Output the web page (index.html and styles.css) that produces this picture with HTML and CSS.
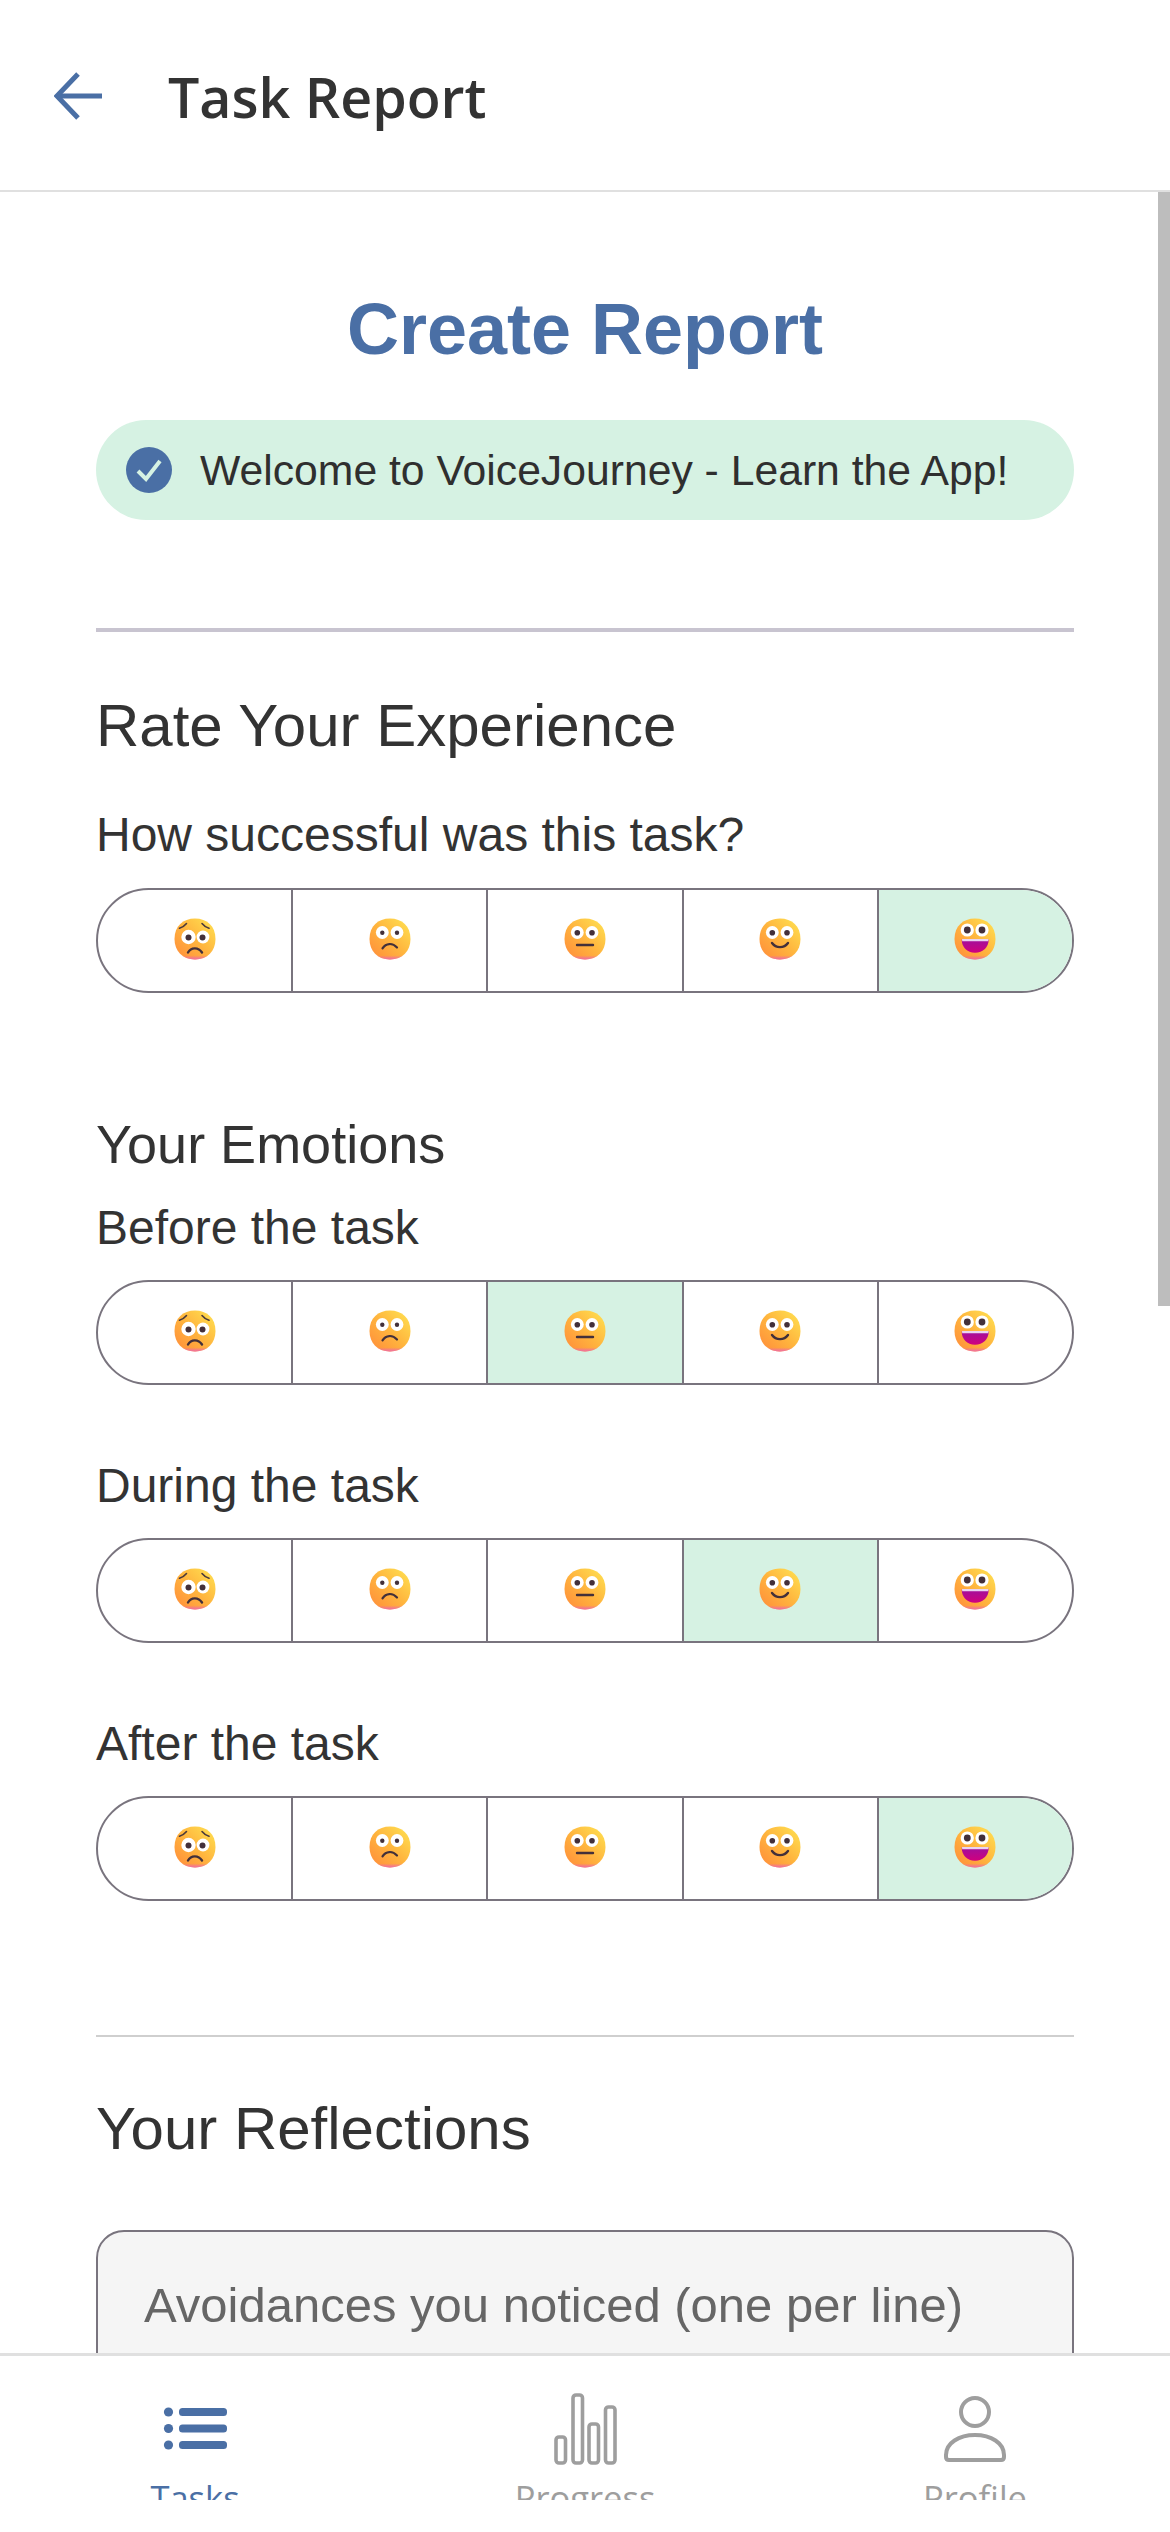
FILE: index.html
```html
<!DOCTYPE html>
<html lang="en">
<head>
<meta charset="UTF-8">
<meta name="viewport" content="width=device-width, initial-scale=1.0">
<title>Task Report</title>
<link rel="stylesheet" href="styles.css">
</head>
<body>
<svg class="svg-defs" aria-hidden="true">
    <defs>
        <linearGradient id="face-fill" x1="0" y1="1" x2="1" y2="0">
            <stop offset="0" stop-color="#ff8a3a"/>
            <stop offset="0.5" stop-color="#ffb53e"/>
            <stop offset="1" stop-color="#ffe452"/>
        </linearGradient>
        <linearGradient id="face-chin" x1="0" y1="0" x2="0" y2="1">
            <stop offset="0.9" stop-color="#f06aa8" stop-opacity="0"/>
            <stop offset="1" stop-color="#ee6ab0"/>
        </linearGradient>
        <linearGradient id="mouth-fill" x1="0" y1="0" x2="0" y2="1">
            <stop offset="0" stop-color="#a0109c"/>
            <stop offset="1" stop-color="#d0007e"/>
        </linearGradient>
        <symbol id="face" viewBox="0 0 42 42">
            <path d="M21 0.5C33 0.5 41.5 8 41.5 21C41.5 33 33.5 41.5 21 41.5C8.5 41.5 0.5 33 0.5 21C0.5 8 9 0.5 21 0.5Z" fill="url(#face-fill)"/>
            <path d="M21 0.5C33 0.5 41.5 8 41.5 21C41.5 33 33.5 41.5 21 41.5C8.5 41.5 0.5 33 0.5 21C0.5 8 9 0.5 21 0.5Z" fill="url(#face-chin)"/>
        </symbol>
        <symbol id="emoji-1" viewBox="0 0 42 42">
            <use href="#face" width="42" height="42"/>
            <circle cx="14.5" cy="19" r="7.2" fill="#fff"/>
            <circle cx="29" cy="19" r="6.4" fill="#fff"/>
            <circle cx="14.5" cy="19.5" r="3" fill="#43303a"/>
            <circle cx="28.5" cy="19.5" r="3" fill="#43303a"/>
            <path d="M5.5 10.2C7.5 9.6 10.5 8 12.5 5.5M28 5.5C30 8 32.5 9.6 35 10.2" fill="none" stroke="#4a3a3c" stroke-width="1.6" stroke-linecap="round"/>
            <path d="M14 34.5C17 29 24.5 29 28 34.5" fill="none" stroke="#43303a" stroke-width="2.4" stroke-linecap="round"/>
        </symbol>
        <symbol id="emoji-2" viewBox="0 0 42 42">
            <use href="#face" width="42" height="42"/>
            <circle cx="13.3" cy="14.5" r="6.4" fill="#fff"/>
            <circle cx="28" cy="14.5" r="6.4" fill="#fff"/>
            <circle cx="13.3" cy="14.7" r="2.2" fill="#43303a"/>
            <circle cx="28" cy="14.7" r="2.2" fill="#43303a"/>
            <path d="M13.5 30.3C17 25 23.5 24.5 28 29.5" fill="none" stroke="#43303a" stroke-width="2.2" stroke-linecap="round"/>
        </symbol>
        <symbol id="emoji-3" viewBox="0 0 42 42">
            <use href="#face" width="42" height="42"/>
            <circle cx="13.3" cy="14.5" r="6.4" fill="#fff"/>
            <circle cx="28" cy="14.5" r="6.4" fill="#fff"/>
            <circle cx="13.3" cy="14.7" r="2.8" fill="#43303a"/>
            <circle cx="28" cy="14.7" r="2.8" fill="#43303a"/>
            <path d="M13 27H29" fill="none" stroke="#43303a" stroke-width="2.4" stroke-linecap="round"/>
        </symbol>
        <symbol id="emoji-4" viewBox="0 0 42 42">
            <use href="#face" width="42" height="42"/>
            <circle cx="13.3" cy="14.5" r="6.4" fill="#fff"/>
            <circle cx="28" cy="14.5" r="6.4" fill="#fff"/>
            <circle cx="13.3" cy="14.7" r="2.8" fill="#43303a"/>
            <circle cx="28" cy="14.7" r="2.8" fill="#43303a"/>
            <path d="M13 25C17 30.5 25 30.5 29 25" fill="none" stroke="#43303a" stroke-width="2.4" stroke-linecap="round"/>
        </symbol>
        <symbol id="emoji-5" viewBox="0 0 42 42">
            <use href="#face" width="42" height="42"/>
            <circle cx="13.3" cy="12" r="6.6" fill="#fff"/>
            <circle cx="28" cy="12" r="6.6" fill="#fff"/>
            <circle cx="13.3" cy="12" r="3.4" fill="#43303a"/>
            <circle cx="28" cy="12" r="3.4" fill="#43303a"/>
            <path d="M7.7 21.5H34.7C34.7 29 29 34.7 21 34.7C13 34.7 7.7 29 7.7 21.5Z" fill="url(#mouth-fill)"/>
            <path d="M8 21H34.5L34.2 23.3H8.2Z" fill="#e9d4f2"/>
        </symbol>
    </defs>
</svg>

<div class="app">
    <header class="top-bar">
        <svg class="back-icon" viewBox="0 0 48 48" fill="none" stroke="#4a6fa5" stroke-width="5">
            <path d="M48 24H4"/>
            <path d="M24 2L3 24L24 46"/>
        </svg>
        <h1 class="top-title">Task Report</h1>
    </header>

    <main class="content">
        <div class="scroll-thumb"></div>
        <h2 class="page-title">Create Report</h2>
        <div class="banner">
            <svg class="banner-check" viewBox="0 0 46 46">
                <circle cx="23" cy="23" r="23" fill="#4a6fa5"/>
                <path d="M12 24L20 32L34 14" fill="none" stroke="#d6f2e3" stroke-width="4"/>
            </svg>
            <span>Welcome to VoiceJourney - Learn the App!</span>
        </div>
        <hr class="rule rule-thick">

        <h3 class="section-title">Rate Your Experience</h3>
        <div class="field-label first">How successful was this task?</div>
        <div class="rating">
            <div class="rating-cell"><svg class="emoji"><use href="#emoji-1"/></svg></div>
            <div class="rating-cell"><svg class="emoji"><use href="#emoji-2"/></svg></div>
            <div class="rating-cell"><svg class="emoji"><use href="#emoji-3"/></svg></div>
            <div class="rating-cell"><svg class="emoji"><use href="#emoji-4"/></svg></div>
            <div class="rating-cell selected"><svg class="emoji"><use href="#emoji-5"/></svg></div>
        </div>

        <h3 class="sub-title">Your Emotions</h3>
        <div class="field-label tight">Before the task</div>
        <div class="rating">
            <div class="rating-cell"><svg class="emoji"><use href="#emoji-1"/></svg></div>
            <div class="rating-cell"><svg class="emoji"><use href="#emoji-2"/></svg></div>
            <div class="rating-cell selected"><svg class="emoji"><use href="#emoji-3"/></svg></div>
            <div class="rating-cell"><svg class="emoji"><use href="#emoji-4"/></svg></div>
            <div class="rating-cell"><svg class="emoji"><use href="#emoji-5"/></svg></div>
        </div>
        <div class="field-label spaced">During the task</div>
        <div class="rating">
            <div class="rating-cell"><svg class="emoji"><use href="#emoji-1"/></svg></div>
            <div class="rating-cell"><svg class="emoji"><use href="#emoji-2"/></svg></div>
            <div class="rating-cell"><svg class="emoji"><use href="#emoji-3"/></svg></div>
            <div class="rating-cell selected"><svg class="emoji"><use href="#emoji-4"/></svg></div>
            <div class="rating-cell"><svg class="emoji"><use href="#emoji-5"/></svg></div>
        </div>
        <div class="field-label spaced">After the task</div>
        <div class="rating">
            <div class="rating-cell"><svg class="emoji"><use href="#emoji-1"/></svg></div>
            <div class="rating-cell"><svg class="emoji"><use href="#emoji-2"/></svg></div>
            <div class="rating-cell"><svg class="emoji"><use href="#emoji-3"/></svg></div>
            <div class="rating-cell"><svg class="emoji"><use href="#emoji-4"/></svg></div>
            <div class="rating-cell selected"><svg class="emoji"><use href="#emoji-5"/></svg></div>
        </div>

        <hr class="rule rule-thin">
        <h3 class="section-title reflections">Your Reflections</h3>
        <div class="note-box">Avoidances you noticed (one per line)</div>
    </main>

    <nav class="bottom-nav">
        <div class="nav-item active">
            <svg class="nav-icon" viewBox="0 0 64 72" fill="#4a6fa5">
                <circle cx="5.5" cy="19" r="4.6"/>
                <rect x="16" y="15" width="48" height="8" rx="3.5"/>
                <circle cx="5.5" cy="35.5" r="4.6"/>
                <rect x="16" y="31.5" width="48" height="8" rx="3.5"/>
                <circle cx="5.5" cy="52" r="4.6"/>
                <rect x="16" y="48" width="48" height="8" rx="3.5"/>
            </svg>
            <span>Tasks</span>
        </div>
        <div class="nav-item">
            <svg class="nav-icon" viewBox="0 0 64 72" fill="none" stroke="#9e9e9e" stroke-width="3.6">
                <rect x="3" y="44" width="9.5" height="26" rx="3"/>
                <rect x="20" y="2" width="9.5" height="68" rx="3"/>
                <rect x="36" y="31" width="9.5" height="39" rx="3"/>
                <rect x="52.5" y="14" width="9.5" height="56" rx="3"/>
            </svg>
            <span>Progress</span>
        </div>
        <div class="nav-item">
            <svg class="nav-icon" viewBox="0 0 64 72" fill="none" stroke="#9e9e9e" stroke-width="4">
                <circle cx="32" cy="19" r="14"/>
                <path d="M3 62C3 50 16 42 32 42C48 42 61 50 61 62V64C61 66 60 67 58 67H6C4 67 3 66 3 64Z"/>
            </svg>
            <span>Profile</span>
        </div>
    </nav>
</div>
</body>
</html>
```

FILE: styles.css
```css
* {
    box-sizing: border-box;
}
html, body {
    margin: 0;
    padding: 0;
    background-color: #fff;
}
body {
    font-family: "Liberation Sans", Arial, sans-serif;
    color: #333;
}
.svg-defs {
    position: absolute;
    width: 0;
    height: 0;
}
.app {
    display: flex;
    flex-direction: column;
    width: 1170px;
    height: 2532px;
    overflow: hidden;
}
.top-bar {
    display: flex;
    align-items: center;
    flex: none;
    height: 192px;
    padding: 2px 0 0 54px;
    border-bottom: 2px solid #e0e0e0;
}
.back-icon {
    width: 48px;
    height: 48px;
    flex: none;
}
.top-title {
    margin: 0 0 0 66px;
    font-family: "Open Sans", sans-serif;
    font-size: 55.5px;
    font-weight: 600;
}
.content {
    position: relative;
    flex: 1;
    overflow: hidden;
    padding: 0 96px;
}
.scroll-thumb {
    position: absolute;
    top: 0;
    right: 0;
    width: 12px;
    height: 1114px;
    background-color: #bdbdbd;
}
.page-title {
    margin: 95px 0 0;
    text-align: center;
    font-size: 72px;
    line-height: 84px;
    font-weight: 700;
    color: #4a6fa5;
}
.banner {
    display: flex;
    align-items: center;
    height: 100px;
    margin-top: 49px;
    padding-left: 30px;
    border-radius: 50px;
    background-color: #d6f2e3;
    font-size: 42.7px;
    color: #2f2f2f;
}
.banner-check {
    width: 46px;
    height: 46px;
    margin-right: 28px;
    flex: none;
}
.rule {
    margin: 0;
    border: none;
}
.rule-thick {
    height: 4px;
    margin-top: 108px;
    background-color: #c8c4d0;
}
.rule-thin {
    height: 2px;
    margin-top: 134px;
    background-color: #cfcfcf;
}
.section-title {
    margin: 61px 0 0;
    font-size: 60px;
    line-height: 66px;
    font-weight: 400;
}
.section-title.reflections {
    margin-top: 59px;
}
.sub-title {
    margin: 121px 0 0;
    font-size: 54px;
    line-height: 60px;
    font-weight: 400;
}
.field-label {
    margin: 0 0 26px;
    font-size: 48px;
    line-height: 52px;
}
.field-label.first {
    margin: 50px 0 27px;
}
.field-label.tight {
    margin-top: 28px;
}
.field-label.spaced {
    margin-top: 75px;
}
.rating {
    display: flex;
    height: 105px;
    border: 2px solid #79747e;
    border-radius: 53px;
    overflow: hidden;
}
.rating-cell {
    display: flex;
    flex: 1;
    align-items: center;
    justify-content: center;
    padding-bottom: 4px;
    border-right: 2px solid #79747e;
}
.rating-cell:last-child {
    border-right: none;
}
.rating-cell.selected {
    background-color: #d6f2e3;
}
.emoji {
    width: 42px;
    height: 42px;
}
.note-box {
    height: 200px;
    margin-top: 68px;
    padding: 46px;
    border: 2px solid #79747e;
    border-radius: 28px;
    background-color: #f5f5f5;
    font-size: 49px;
    line-height: 54px;
    color: #666;
}
.bottom-nav {
    display: flex;
    flex: none;
    justify-content: space-between;
    height: 179px;
    padding: 37px 0 32px;
    border-top: 3px solid #e0e0e0;
    background-color: #fff;
}
.nav-item {
    display: flex;
    flex-direction: column;
    align-items: center;
    width: 390px;
    overflow: hidden;
    font-family: "Open Sans", sans-serif;
    font-size: 34.5px;
    line-height: 48px;
    color: #9e9e9e;
}
.nav-item.active {
    color: #4a6fa5;
}
.nav-icon {
    width: 64px;
    height: 72px;
    flex: none;
    margin-bottom: 9px;
}
```
